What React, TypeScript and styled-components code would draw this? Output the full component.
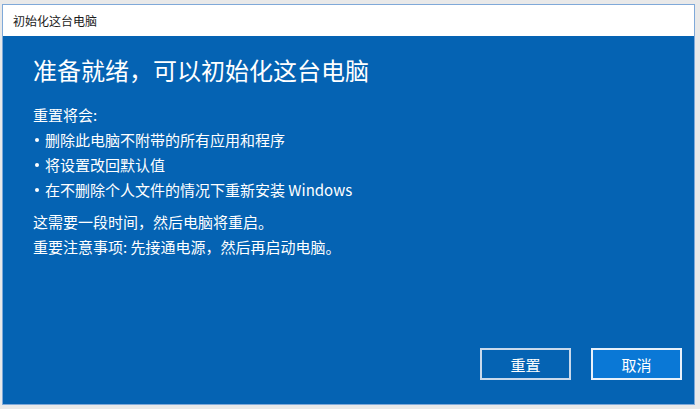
import React from 'react';
import styled, { createGlobalStyle } from 'styled-components';

const GlobalStyle = createGlobalStyle`
  html, body {
    margin: 0;
    padding: 0;
    background: #e9e9e9;
  }
  body {
    font-family: "Microsoft YaHei", "Noto Sans CJK SC", "Noto Sans", sans-serif;
  }
`;

const Page = styled.div`
  width: 700px;
  height: 409px;
  padding: 4px 5px 4px 2px;
  box-sizing: border-box;
  display: flex;
`;

const Window = styled.div`
  flex: 1;
  display: flex;
  flex-direction: column;
  border: 1px solid #7fa9d9;
  background: #0563b3;
`;

const TitleBar = styled.div`
  height: 31px;
  background: #ffffff;
  display: flex;
  align-items: center;
  padding-left: 10px;
  font-size: 12px;
  color: #1a1a1a;
`;

const Body = styled.div`
  flex: 1;
  display: flex;
  flex-direction: column;
  padding: 17px 12px 24px 30px;
  color: #ffffff;
`;

const Heading = styled.h1`
  margin: 0 0 15px;
  font-size: 24px;
  font-weight: 400;
  line-height: 34px;
`;

const Line = styled.div<{ $gap?: number }>`
  font-size: 15px;
  line-height: 25px;
  margin-top: ${(p) => p.$gap ?? 0}px;
`;

const Bullet = styled(Line)`
  display: flex;
  align-items: center;

  &::before {
    content: '';
    width: 4px;
    height: 4px;
    border-radius: 50%;
    background: #ffffff;
    margin: 0 6px 0 2px;
  }
`;

const Footer = styled.div`
  margin-top: auto;
  display: flex;
  justify-content: flex-end;
  gap: 20px;
`;

const Button = styled.button<{ $primary?: boolean }>`
  width: 91px;
  height: 32px;
  box-sizing: border-box;
  border: 2px solid ${(p) => (p.$primary ? '#e8f1fb' : '#c9d9ec')};
  background: ${(p) => (p.$primary ? '#0a78d6' : 'transparent')};
  color: #ffffff;
  font-family: inherit;
  font-size: 15px;
  cursor: pointer;
`;

export default function App() {
  return (
    <>
      <GlobalStyle />
      <Page>
        <Window>
          <TitleBar>初始化这台电脑</TitleBar>
          <Body>
            <Heading>准备就绪，可以初始化这台电脑</Heading>
            <Line>重置将会:</Line>
            <Bullet>删除此电脑不附带的所有应用和程序</Bullet>
            <Bullet>将设置改回默认值</Bullet>
            <Bullet>在不删除个人文件的情况下重新安装 Windows</Bullet>
            <Line $gap={7}>这需要一段时间，然后电脑将重启。</Line>
            <Line>重要注意事项: 先接通电源，然后再启动电脑。</Line>
            <Footer>
              <Button>重置</Button>
              <Button $primary>取消</Button>
            </Footer>
          </Body>
        </Window>
      </Page>
    </>
  );
}
